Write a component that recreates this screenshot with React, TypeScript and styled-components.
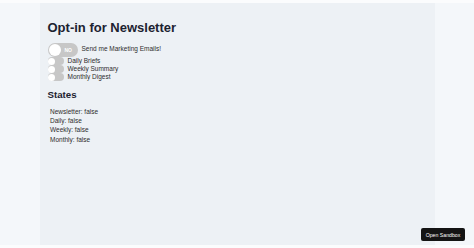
import React, { useState } from 'react';
import styled, { createGlobalStyle } from 'styled-components';

const GlobalStyle = createGlobalStyle`
  html, body {
    margin: 0;
    padding: 0;
    background: #fbfcfd;
    font-family: "Liberation Sans", Arial, sans-serif;
  }
`;

const Page = styled.div`
  margin: 3px 0;
  height: 242px;
  background: #f4f7fa;
`;

const Container = styled.main`
  width: 395px;
  height: 100%;
  margin: 0 auto;
  box-sizing: border-box;
  padding: 17px 8px 0;
  background: #edf1f5;
  color: #333;
`;

const Title = styled.h1`
  margin: 0 0 8px;
  font-size: 13px;
  line-height: 15px;
  font-weight: 700;
  color: #1c2230;
`;

const SubTitle = styled.h2`
  margin: 8px 0 7px;
  font-size: 9.7px;
  line-height: 11px;
  font-weight: 700;
  color: #1c2230;
`;

const ToggleRow = styled.label`
  display: flex;
  align-items: center;
  gap: 4px;
  font-size: 6.5px;
  color: #2d2d2d;
  cursor: pointer;
`;

const Track = styled.span<{ $big?: boolean; $on: boolean }>`
  position: relative;
  display: inline-flex;
  align-items: center;
  box-sizing: border-box;
  width: ${({ $big }) => ($big ? '30px' : '16px')};
  height: ${({ $big }) => ($big ? '14px' : '8px')};
  padding: ${({ $big }) => ($big ? '1px' : '0.5px')};
  border-radius: 999px;
  background: ${({ $on }) => ($on ? '#4caf50' : '#c7c7c7')};
`;

const Knob = styled.span<{ $big?: boolean }>`
  width: ${({ $big }) => ($big ? '12px' : '7px')};
  height: ${({ $big }) => ($big ? '12px' : '7px')};
  border-radius: 50%;
  background: #fff;
`;

const TrackText = styled.span`
  position: absolute;
  left: 17px;
  top: 0;
  line-height: 14px;
  font-size: 5px;
  font-weight: 700;
  color: #fff;
`;

const RowLabel = styled.span<{ $big?: boolean }>`
  line-height: ${({ $big }) => ($big ? '12px' : '8px')};
  align-self: flex-start;
`;

const StateList = styled.div`
  padding-left: 2.5px;
  font-size: 6.5px;
  line-height: 9.2px;
  color: #2d2d2d;
`;

const SandboxButton = styled.button`
  position: fixed;
  right: 9px;
  bottom: 7px;
  width: 44px;
  height: 13px;
  padding: 0;
  border: none;
  border-radius: 2px;
  background: #141414;
  color: #fff;
  font-family: "Liberation Sans", Arial, sans-serif;
  font-size: 5.2px;
  cursor: pointer;
`;

interface ToggleProps {
  label: string;
  on: boolean;
  big?: boolean;
  onToggle: () => void;
}

const Toggle: React.FC<ToggleProps> = ({ label, on, big, onToggle }) => (
  <ToggleRow onClick={onToggle}>
    <Track $big={big} $on={on}>
      <Knob $big={big} />
      {big && <TrackText>{on ? 'YES' : 'NO'}</TrackText>}
    </Track>
    <RowLabel $big={big}>{label}</RowLabel>
  </ToggleRow>
);

export default function App() {
  const [newsletter, setNewsletter] = useState(false);
  const [daily, setDaily] = useState(false);
  const [weekly, setWeekly] = useState(false);
  const [monthly, setMonthly] = useState(false);

  return (
    <>
      <GlobalStyle />
      <Page>
        <Container>
          <Title>Opt-in for Newsletter</Title>
          <Toggle big label="Send me Marketing Emails!" on={newsletter} onToggle={() => setNewsletter(!newsletter)} />
          <Toggle label="Daily Briefs" on={daily} onToggle={() => setDaily(!daily)} />
          <Toggle label="Weekly Summary" on={weekly} onToggle={() => setWeekly(!weekly)} />
          <Toggle label="Monthly Digest" on={monthly} onToggle={() => setMonthly(!monthly)} />
          <SubTitle>States</SubTitle>
          <StateList>
            <div>Newsletter: {String(newsletter)}</div>
            <div>Daily: {String(daily)}</div>
            <div>Weekly: {String(weekly)}</div>
            <div>Monthly: {String(monthly)}</div>
          </StateList>
        </Container>
      </Page>
      <SandboxButton>Open Sandbox</SandboxButton>
    </>
  );
}
